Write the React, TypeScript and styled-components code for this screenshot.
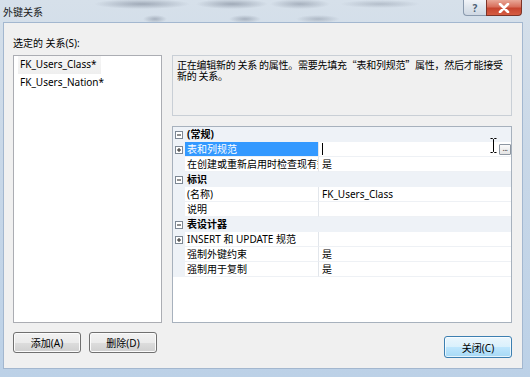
import React from 'react';
import styled, { createGlobalStyle } from 'styled-components';

const Global = createGlobalStyle`
  html, body { margin: 0; padding: 0; width: 530px; height: 377px; overflow: hidden; }
  body {
    font-family: "Noto Sans", "Noto Sans CJK SC", sans-serif;
    font-size: 10px;
    color: #000;
  }
  * { box-sizing: border-box; }
`;

const Window = styled.div`
  width: 530px;
  height: 377px;
  display: flex;
  flex-direction: column;
  background: linear-gradient(180deg, #d6e0ea 0%, #c9d8e8 40%, #bcd1e7 100%);
`;

const TitleBar = styled.div`
  height: 22px;
  flex-shrink: 0;
  display: flex;
  align-items: flex-start;
  background:
    radial-gradient(ellipse 48px 5px at 142px 4px, rgba(60, 70, 90, 0.35), transparent),
    radial-gradient(ellipse 36px 5px at 232px 4px, rgba(60, 70, 90, 0.35), transparent),
    radial-gradient(ellipse 30px 5px at 300px 4px, rgba(60, 70, 90, 0.3), transparent),
    radial-gradient(ellipse 40px 4px at 380px 4px, rgba(60, 70, 90, 0.22), transparent),
    radial-gradient(ellipse 12px 4px at 155px 19px, rgba(60, 70, 90, 0.3), transparent),
    radial-gradient(ellipse 16px 4px at 245px 19px, rgba(60, 70, 90, 0.3), transparent),
    radial-gradient(ellipse 22px 4px at 318px 19px, rgba(60, 70, 90, 0.25), transparent);
`;

const Title = styled.div`
  padding-left: 3px;
  line-height: 24px;
  font-size: 10px;
  color: #1a1a1a;
`;

const Caption = styled.div`
  margin-left: auto;
  margin-right: 8px;
  display: flex;
`;

const HelpButton = styled.div`
  width: 23px;
  height: 16px;
  border: 1px solid #8a9aae;
  border-top: none;
  border-right: none;
  border-radius: 0 0 0 4px;
  background: linear-gradient(180deg, #f1f4f8 0%, #dde4ec 50%, #cfd8e3 100%);
  display: flex;
  align-items: center;
  justify-content: center;
  color: #4d5e74;
  font-size: 10px;
  font-weight: bold;
`;

const CloseButton = styled.div`
  width: 36px;
  height: 16px;
  border: 1px solid #7d3428;
  border-top: none;
  border-radius: 0 0 4px 0;
  background: linear-gradient(180deg, #e9a898 0%, #d86f5c 45%, #c7452f 55%, #d55c42 100%);
  display: flex;
  align-items: center;
  justify-content: center;
`;

const Client = styled.div`
  flex: 1;
  margin: 0 7px 8px 3px;
  border: 1px solid #a3b7cf;
  background: #f0f0f0;
  display: grid;
  grid-template-columns: 149px 340px;
  column-gap: 10px;
  padding: 12px 10px 0 9px;
`;

const Column = styled.div<{ $top?: number }>`
  display: flex;
  flex-direction: column;
  padding-top: ${(p) => p.$top ?? 0}px;
`;

const Label = styled.div`
  height: 16px;
  line-height: 16px;
  margin-bottom: 4px;
`;

const ListBox = styled.div`
  height: 268px;
  background: #fff;
  border: 1px solid #abadb3;
  padding: 0 4px;
  display: flex;
  flex-direction: column;
  align-items: flex-start;
`;

const ListItem = styled.div<{ $active?: boolean }>`
  height: 18px;
  line-height: 16px;
  padding: 0 4px 2px 2px;
  background: ${(p) => (p.$active ? 'linear-gradient(#f6f6f6, #efefef)' : 'transparent')};
`;

const ButtonRow = styled.div`
  display: flex;
  gap: 8px;
  margin-top: 9px;
`;

const PushButton = styled.div<{ $default?: boolean }>`
  width: 68px;
  height: ${(p) => (p.$default ? 22 : 21)}px;
  border: 1px solid ${(p) => (p.$default ? '#3c7fb1' : '#707070')};
  border-radius: 3px;
  background: ${(p) =>
    p.$default
      ? 'linear-gradient(180deg, #eaf6fd 0%, #d9f0fc 50%, #bee6fd 51%, #a7d9f5 100%)'
      : 'linear-gradient(180deg, #f2f2f2 0%, #ebebeb 50%, #dddddd 51%, #cfcfcf 100%)'};
  box-shadow: inset 0 0 0 1px ${(p) => (p.$default ? 'rgba(255,255,255,0.7)' : '#fbfbfb')};
  display: flex;
  align-items: center;
  justify-content: center;
  font-size: 10px;
`;

const Description = styled.div`
  height: 61px;
  border: 1px solid #c9cfd6;
  background: #f0f0f0;
  padding: 3px 2px 0 4px;
  line-height: 11px;
  font-family: "Noto Sans CJK SC", sans-serif;
  letter-spacing: -0.25px;
  margin-bottom: 10px;
`;

const Grid = styled.div`
  position: relative;
  height: 197px;
  border: 1px solid #a7b1bd;
  background: #fff;
  display: flex;
  flex-direction: column;
`;

const CategoryRow = styled.div`
  height: 15px;
  display: flex;
  align-items: center;
  background: #eef2f7;
  font-weight: bold;
`;

const PropRow = styled.div`
  height: 15px;
  display: flex;
`;

const Gutter = styled.div`
  width: 12px;
  flex-shrink: 0;
  display: flex;
  align-items: center;
  padding-left: 2px;
  background: #eef2f7;
`;

const CatLabel = styled.div`
  padding-left: 2px;
  line-height: 15px;
`;

const NameCell = styled.div<{ $selected?: boolean }>`
  width: 134px;
  flex-shrink: 0;
  padding-left: 2px;
  line-height: 14px;
  white-space: nowrap;
  overflow: hidden;
  border-bottom: 1px solid #eef1f5;
  border-right: 1px solid #e2e6eb;
  background: ${(p) => (p.$selected ? '#3399ff' : '#fff')};
  color: ${(p) => (p.$selected ? '#fff' : '#000')};
`;

const ValueCell = styled.div`
  flex: 1;
  display: flex;
  align-items: center;
  padding-left: 3px;
  line-height: 14px;
  white-space: nowrap;
  border-bottom: 1px solid #eef1f5;
`;

const Caret = styled.div`
  width: 1px;
  height: 12px;
  background: #000;
`;

const EllipsisButton = styled.div`
  margin-left: auto;
  margin-right: 0;
  width: 12px;
  height: 11px;
  border: 1px solid #8d96a1;
  border-radius: 1px;
  background: linear-gradient(#fafafa, #e4e4e4);
  font-size: 8px;
  line-height: 6px;
  text-align: center;
  color: #333;
  letter-spacing: -0.5px;
`;

const MouseCursor = styled.svg`
  position: absolute;
  left: 317px;
  top: 11px;
`;

const CloseRow = styled.div`
  display: flex;
  justify-content: flex-end;
  margin-top: 13px;
`;

const Expander: React.FC<{ open?: boolean }> = ({ open }) => (
  <svg width="8" height="8" viewBox="0 0 8 8">
    <rect x="0.5" y="0.5" width="7" height="7" fill="#fff" stroke="#7c8794" />
    <line x1="2" y1="4" x2="6" y2="4" stroke="#222" />
    {!open && <line x1="4" y1="2" x2="4" y2="6" stroke="#222" />}
  </svg>
);

type Row =
  | { kind: 'cat'; label: string }
  | { kind: 'prop'; name: string; value?: string; expandable?: boolean; selected?: boolean };

const rows: Row[] = [
  { kind: 'cat', label: '(常规)' },
  { kind: 'prop', name: '表和列规范', expandable: true, selected: true },
  { kind: 'prop', name: '在创建或重新启用时检查现有数据', value: '是' },
  { kind: 'cat', label: '标识' },
  { kind: 'prop', name: '(名称)', value: 'FK_Users_Class' },
  { kind: 'prop', name: '说明' },
  { kind: 'cat', label: '表设计器' },
  { kind: 'prop', name: 'INSERT 和 UPDATE 规范', expandable: true },
  { kind: 'prop', name: '强制外键约束', value: '是' },
  { kind: 'prop', name: '强制用于复制', value: '是' },
];

export default function App() {
  return (
    <>
      <Global />
      <Window>
        <TitleBar>
          <Title>外键关系</Title>
          <Caption>
            <HelpButton>?</HelpButton>
            <CloseButton>
              <svg width="12" height="10" viewBox="0 0 12 10">
                <path d="M2 1 L10 9 M10 1 L2 9" stroke="#fff" strokeWidth="2.6" strokeLinecap="round" />
              </svg>
            </CloseButton>
          </Caption>
        </TitleBar>
        <Client>
          <Column>
            <Label>选定的 关系(S):</Label>
            <ListBox>
              <ListItem $active>FK_Users_Class*</ListItem>
              <ListItem>FK_Users_Nation*</ListItem>
            </ListBox>
            <ButtonRow>
              <PushButton>添加(A)</PushButton>
              <PushButton>删除(D)</PushButton>
            </ButtonRow>
          </Column>
          <Column $top={20}>
            <Description>
              正在编辑新的 关系 的属性。需要先填充“表和列规范”属性，然后才能接受新的 关系。
            </Description>
            <Grid>
              {rows.map((r, i) =>
                r.kind === 'cat' ? (
                  <CategoryRow key={i}>
                    <Gutter>
                      <Expander open />
                    </Gutter>
                    <CatLabel>{r.label}</CatLabel>
                  </CategoryRow>
                ) : (
                  <PropRow key={i}>
                    <Gutter>{r.expandable && <Expander />}</Gutter>
                    <NameCell $selected={r.selected}>{r.name}</NameCell>
                    <ValueCell>
                      {r.selected ? (
                        <>
                          <Caret />
                          <EllipsisButton>...</EllipsisButton>
                        </>
                      ) : (
                        r.value
                      )}
                    </ValueCell>
                  </PropRow>
                )
              )}
              <MouseCursor width="7" height="15" viewBox="0 0 7 15">
                <path d="M0.5 0.5 H2.5 L3.5 1.5 L4.5 0.5 H6.5 M3.5 1.5 V13.5 M0.5 14.5 H2.5 L3.5 13.5 L4.5 14.5 H6.5" stroke="#000" fill="none" strokeWidth="1" />
              </MouseCursor>
            </Grid>
            <CloseRow>
              <PushButton $default>关闭(C)</PushButton>
            </CloseRow>
          </Column>
        </Client>
      </Window>
    </>
  );
}
